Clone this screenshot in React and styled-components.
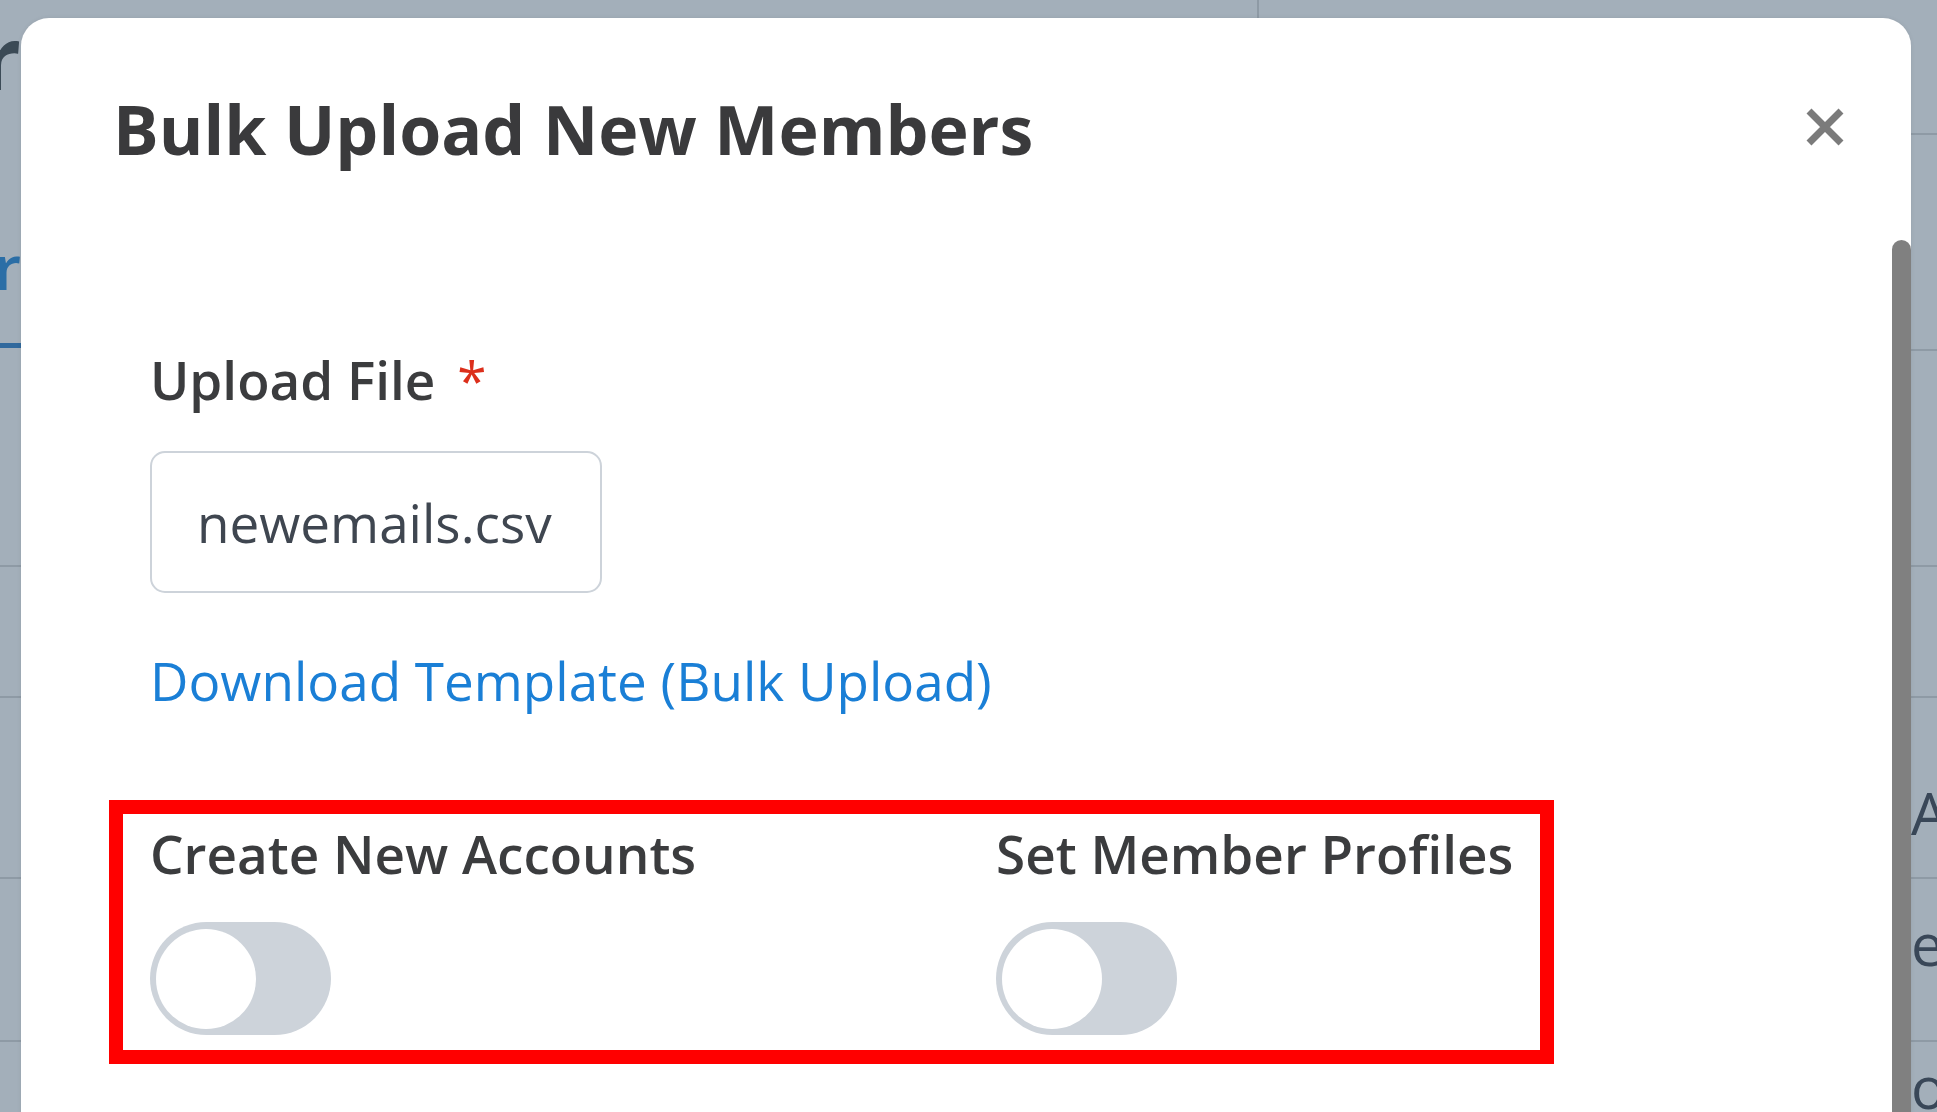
import React from "react";
import styled, { createGlobalStyle } from "styled-components";

const GlobalStyle = createGlobalStyle`
  * {
    box-sizing: border-box;
  }
  html,
  body {
    margin: 0;
    height: 100%;
    overflow: hidden;
  }
  body {
    font-family: "Open Sans", "Noto Sans", sans-serif;
    background: #ffffff;
  }
`;

/* ---------- page behind the dialog ---------- */

const Page = styled.div`
  width: 1937px;
  height: 1112px;
  display: flex;
  flex-direction: column;
  background: #ffffff;
  color: #2f3437;
`;

const PageRow = styled.div`
  display: flex;
  flex: none;
  height: ${(props) => props.$h}px;
`;

const LeftSliver = styled.div`
  width: 21px;
  height: ${(props) => props.$h || "100%"};
  display: flex;
  justify-content: flex-end;
  align-items: flex-start;
  padding-top: ${(props) => props.$top || 0}px;
  overflow: hidden;
  white-space: nowrap;
  border-bottom: ${(props) => props.$line || "none"};
`;

const Middle = styled.div`
  flex: 1;
  display: grid;
  grid-template-columns: 1236px 1fr;
  border-bottom: ${(props) => props.$line || "none"};
`;

const Divider = styled.div`
  border-left: ${(props) => (props.$show ? "2px solid #d5d5d5" : "none")};
`;

const RightSliver = styled.div`
  width: 26px;
  padding-top: ${(props) => props.$top || 0}px;
  overflow: hidden;
  white-space: nowrap;
  border-bottom: ${(props) => props.$line || "none"};
`;

const PageHeading = styled.span`
  font-size: 88px;
  line-height: 1;
  font-weight: 700;
  color: #2f3437;
`;

const PageTab = styled.span`
  font-size: 62px;
  line-height: 1;
  font-weight: 600;
  color: #0f7dd7;
`;

const CellText = styled.span`
  display: block;
  font-size: 58px;
  line-height: 1;
  color: #2a2f3a;
  margin-left: ${(props) => props.$shift || 0}px;
`;

const LINE = "2px solid #d5d5d5";

/* ---------- dialog ---------- */

const Overlay = styled.div`
  position: fixed;
  inset: 0;
  display: flex;
  padding: 18px 26px 0 21px;
  background: rgba(71, 95, 117, 0.5);
  overflow: hidden;
`;

const Modal = styled.div`
  position: relative;
  width: 1890px;
  height: 1200px;
  flex: none;
  background: #ffffff;
  border-radius: 28px 28px 0 0;
  box-shadow: 0 0 4px rgba(0, 0, 0, 0.08);
  overflow: hidden;
`;

const Header = styled.header`
  display: flex;
  align-items: center;
  justify-content: space-between;
  padding: 70px 66px 0 92px;
`;

const Title = styled.h2`
  margin: 0;
  font-size: 68px;
  line-height: 1.2;
  font-weight: 700;
  color: #3a3a3c;
`;

const CloseButton = styled.button`
  width: 40px;
  height: 40px;
  margin-top: -4px;
  padding: 0;
  border: none;
  background: none;
  display: flex;
  cursor: pointer;
`;

const Body = styled.div`
  display: flex;
  flex-direction: column;
  align-items: flex-start;
  padding: 178px 0 0 129px;
`;

const FieldLabel = styled.label`
  font-size: 53px;
  line-height: 1.2;
  font-weight: 600;
  color: #3b3c3e;
`;

const Required = styled.span`
  margin-left: 22px;
  font-weight: 400;
  color: #dc2f1b;
`;

const FileBox = styled.div`
  display: flex;
  align-items: center;
  height: 142px;
  margin-top: 40px;
  padding: 0 48px 0 45px;
  border: 2px solid #cdd3da;
  border-radius: 15px;
  font-size: 53px;
  color: #3f4650;
`;

const TemplateLink = styled.a`
  margin-top: 56px;
  font-size: 53px;
  line-height: 1.2;
  color: #1a7fd6;
  text-decoration: none;
  cursor: pointer;
`;

const Highlight = styled.div`
  display: grid;
  grid-template-columns: 846px auto;
  margin: 87px 0 0 -41px;
  padding: 8px 27px 15px;
  border: 14px solid #ff0000;
`;

const OptionGroup = styled.div`
  display: flex;
  flex-direction: column;
  align-items: flex-start;
  gap: 37px;
`;

const Track = styled.div`
  width: 181px;
  height: 113px;
  display: flex;
  align-items: center;
  padding-left: 6px;
  border-radius: 57px;
  background: ${(props) => (props.$on ? "#1a7fd6" : "#cdd3da")};
`;

const Knob = styled.span`
  width: 100px;
  height: 100px;
  border-radius: 50%;
  background: #ffffff;
`;

const ScrollThumb = styled.div`
  position: absolute;
  top: 222px;
  right: 0;
  bottom: 0;
  width: 19px;
  border-radius: 10px 10px 0 0;
  background: #808080;
`;

const Toggle = ({ on }) => (
  <Track $on={on}>
    <Knob />
  </Track>
);

const options = ["Create New Accounts", "Set Member Profiles"];

const App = () => {
  return (
    <>
      <GlobalStyle />
      <Page>
        <PageRow $h={135}>
          <LeftSliver $top={12}>
            <PageHeading>Member</PageHeading>
          </LeftSliver>
          <Middle>
            <div />
            <Divider $show />
          </Middle>
          <RightSliver $line={LINE} />
        </PageRow>
        <PageRow $h={216}>
          <LeftSliver $top={100} $h="213px" $line="5px solid #1a72c4">
            <PageTab>Member</PageTab>
          </LeftSliver>
          <Middle />
          <RightSliver $line={LINE} />
        </PageRow>
        <PageRow $h={216}>
          <LeftSliver $line={LINE} />
          <Middle $line={LINE} />
          <RightSliver $line={LINE} />
        </PageRow>
        <PageRow $h={131}>
          <LeftSliver $line={LINE} />
          <Middle $line={LINE} />
          <RightSliver $line={LINE} />
        </PageRow>
        <PageRow $h={181}>
          <LeftSliver $line={LINE} />
          <Middle $line={LINE} />
          <RightSliver $top={86} $line={LINE}>
            <CellText>Actions</CellText>
          </RightSliver>
        </PageRow>
        <PageRow $h={163}>
          <LeftSliver $line={LINE} />
          <Middle $line={LINE} />
          <RightSliver $top={36} $line={LINE}>
            <CellText>er</CellText>
          </RightSliver>
        </PageRow>
        <PageRow $h={70}>
          <LeftSliver />
          <Middle />
          <RightSliver $top={16}>
            <CellText>or</CellText>
          </RightSliver>
        </PageRow>
      </Page>

      <Overlay>
        <Modal role="dialog" aria-label="Bulk Upload New Members">
          <Header>
            <Title>Bulk Upload New Members</Title>
            <CloseButton aria-label="Close">
              <svg width="40" height="40" viewBox="0 0 40 40">
                <path
                  d="M4 4 L36 36 M36 4 L4 36"
                  stroke="#7b7b7b"
                  strokeWidth="7"
                  strokeLinecap="butt"
                />
              </svg>
            </CloseButton>
          </Header>

          <Body>
            <FieldLabel>
              Upload File<Required>*</Required>
            </FieldLabel>
            <FileBox>newemails.csv</FileBox>
            <TemplateLink>Download Template (Bulk Upload)</TemplateLink>

            <Highlight>
              {options.map((option) => (
                <OptionGroup key={option}>
                  <FieldLabel>{option}</FieldLabel>
                  <Toggle on={false} />
                </OptionGroup>
              ))}
            </Highlight>
          </Body>

          <ScrollThumb />
        </Modal>
      </Overlay>
    </>
  );
};

export default App;
